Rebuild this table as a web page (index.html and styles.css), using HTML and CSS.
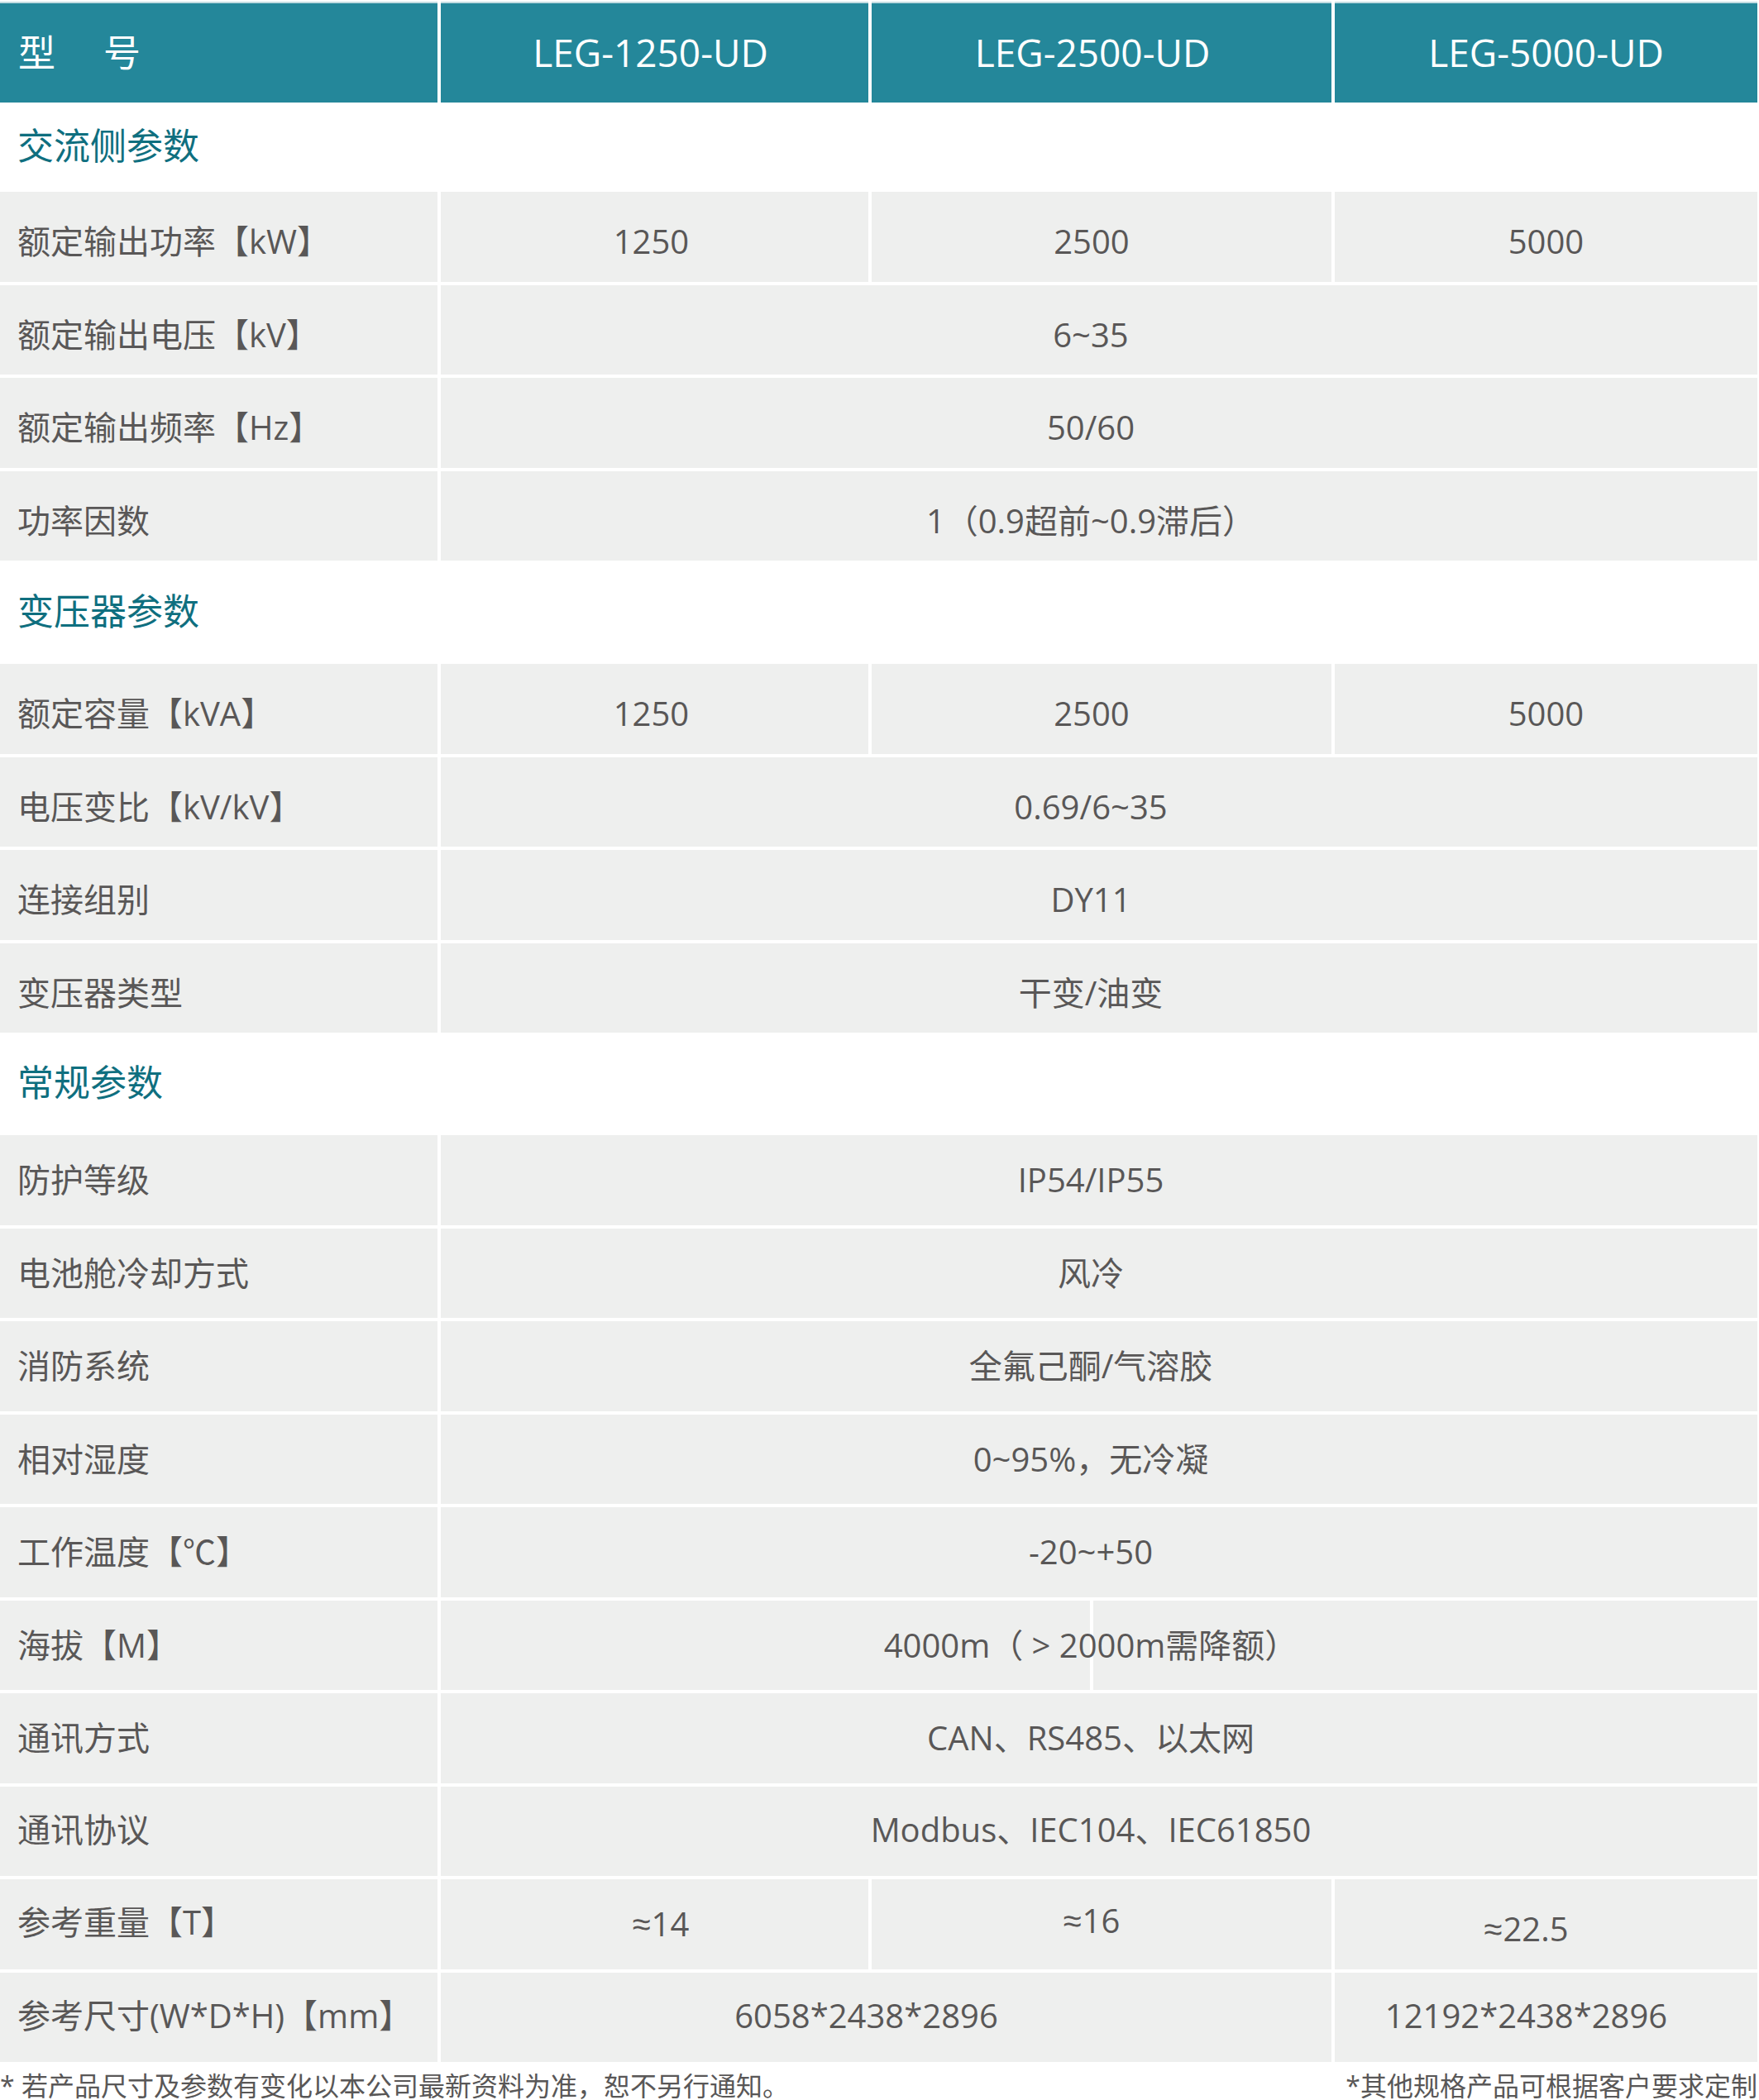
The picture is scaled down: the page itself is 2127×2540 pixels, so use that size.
FILE: index.html
```html
<!DOCTYPE html>
<html lang="zh-CN">
<head>
<meta charset="utf-8">
<title>LEG-UD 参数</title>
<link rel="stylesheet" href="styles.css">
</head>
<body>
<div class="page">
  <div class="spec">
    <div class="cell head label-head"><span class="hsp">型</span>号</div>
    <div class="cell head h2">LEG-1250-UD</div>
    <div class="cell head h3">LEG-2500-UD</div>
    <div class="cell head">LEG-5000-UD</div>

    <div class="section first">交流侧参数</div>

    <div class="group low">
      <div class="cell label">额定输出功率【kW】</div>
      <div class="cell val c2">1250</div>
      <div class="cell val c3">2500</div>
      <div class="cell val c4">5000</div>

      <div class="cell label">额定输出电压【kV】</div>
      <div class="cell val all">6~35</div>

      <div class="cell label">额定输出频率【Hz】</div>
      <div class="cell val all">50/60</div>

      <div class="cell label">功率因数</div>
      <div class="cell val all">1（0.9超前~0.9滞后）</div>
    </div>

    <div class="section mid">变压器参数</div>

    <div class="group low">
      <div class="cell label">额定容量【kVA】</div>
      <div class="cell val c2">1250</div>
      <div class="cell val c3">2500</div>
      <div class="cell val c4">5000</div>

      <div class="cell label">电压变比【kV/kV】</div>
      <div class="cell val all">0.69/6~35</div>

      <div class="cell label">连接组别</div>
      <div class="cell val all">DY11</div>

      <div class="cell label">变压器类型</div>
      <div class="cell val all">干变/油变</div>
    </div>

    <div class="section last">常规参数</div>

    <div class="group">
      <div class="cell label">防护等级</div>
      <div class="cell val all">IP54/IP55</div>

      <div class="cell label">电池舱冷却方式</div>
      <div class="cell val all">风冷</div>

      <div class="cell label">消防系统</div>
      <div class="cell val all">全氟己酮/气溶胶</div>

      <div class="cell label">相对湿度</div>
      <div class="cell val all">0~95%，无冷凝</div>

      <div class="cell label">工作温度【℃】</div>
      <div class="cell val all">-20~+50</div>

      <div class="cell label">海拔【M】</div>
      <div class="cell val all split"><span class="txt">4000m（ &gt; 2000m需降额）</span></div>

      <div class="cell label">通讯方式</div>
      <div class="cell val all">CAN、RS485、以太网</div>
    </div>

    <div class="group high">
      <div class="cell label">通讯协议</div>
      <div class="cell val all">Modbus、IEC104、IEC61850</div>

      <div class="cell label">参考重量【T】</div>
      <div class="cell val c2 w14"><span class="approx">≈</span>14</div>
      <div class="cell val c3 w16"><span class="approx">≈</span>16</div>
      <div class="cell val c4 w22"><span class="approx">≈</span>22.5</div>

      <div class="cell label">参考尺寸(W*D*H)【mm】</div>
      <div class="cell val two">6058*2438*2896</div>
      <div class="cell val c4 d4">12192*2438*2896</div>
    </div>
  </div>

  <div class="notes">
    <span class="note">* 若产品尺寸及参数有变化以本公司最新资料为准，恕不另行通知。</span>
    <span class="note">*其他规格产品可根据客户要求定制</span>
  </div>
</div>
</body>
</html>
```

FILE: styles.css
```css
* {
  box-sizing: border-box;
}

html,
body {
  margin: 0;
  padding: 0;
  background: #ffffff;
  overflow: hidden;
}

body {
  width: 2127px;
  font-family: "Open Sans", "Noto Sans CJK SC", sans-serif;
  color: #595757;
}

.page {
  padding-top: 2px;
}

.spec {
  display: grid;
  grid-template-columns: 529px 517px 556px 511px;
  column-gap: 4px;
  row-gap: 4px;
}

.group {
  display: contents;
}

.cell {
  display: flex;
  align-items: center;
  height: 108.5px;
  background: #eeefee;
  font-size: 40px;
  line-height: 1.2;
  white-space: nowrap;
}

.low .cell {
  padding-top: 12px;
}

.high .cell {
  padding-bottom: 4px;
}

.label {
  padding-left: 21px;
}

.val {
  justify-content: center;
}

.head {
  height: 122px;
  background: #24879a;
  border-top: 2px solid #c3dce2;
  color: #ffffff;
  font-size: 46px;
  justify-content: center;
}

.head.h2 {
  padding-right: 10px;
}

.head.h3 {
  padding-right: 22px;
}

.head.label-head {
  justify-content: flex-start;
  padding-left: 22px;
  font-size: 45px;
}

.hsp {
  margin-right: 58px;
}

.section {
  grid-column: 1 / -1;
  display: flex;
  align-items: center;
  padding-left: 21px;
  padding-bottom: 8px;
  font-size: 44px;
  color: #0f6f7f;
  background: #ffffff;
}

.section.first {
  height: 100px;
}

.section.mid {
  height: 117px;
}

.section.last {
  height: 116px;
}

.c2 {
  padding-right: 8px;
}

.c3 {
  padding-right: 24px;
}

.all {
  grid-column: span 3;
  padding-right: 20px;
}

.two {
  grid-column: span 2;
  padding-right: 48px;
}

.d4 {
  padding-right: 48px;
}

.approx {
  font-family: "Liberation Sans", sans-serif;
  margin-right: 1px;
}

.high .w14 {
  padding-left: 15px;
  padding-right: 0;
  padding-bottom: 0;
}

.high .w16 {
  padding-bottom: 8px;
}

.high .w22 {
  padding-right: 48px;
  padding-top: 12px;
  padding-bottom: 0;
}

.split {
  position: relative;
}

.split::before {
  content: "";
  position: absolute;
  top: 0;
  bottom: 0;
  left: 785px;
  width: 4px;
  background: #ffffff;
}

.split .txt {
  position: relative;
}

.notes {
  display: flex;
  justify-content: space-between;
  margin-top: 13px;
  padding-right: 2px;
  font-size: 32px;
  line-height: 1;
  white-space: nowrap;
}
```
